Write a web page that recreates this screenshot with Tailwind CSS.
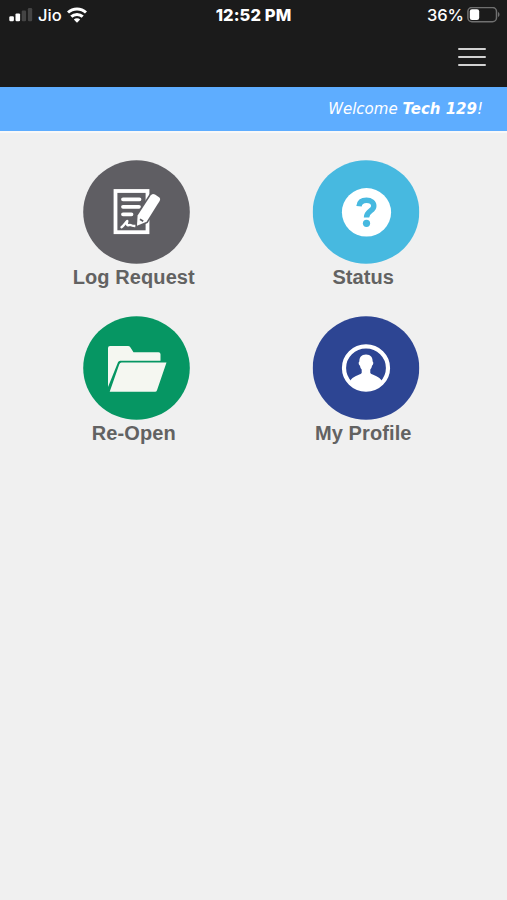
<!DOCTYPE html>
<html lang="en">
<head>
    <meta charset="UTF-8">
    <meta name="viewport" content="width=device-width, initial-scale=1.0">
    <title>Service Desk</title>
    <script src="https://cdn.jsdelivr.net/npm/@tailwindcss/browser@4"></script>
</head>
<body class="bg-[#f0f0f0] min-h-screen font-['Liberation_Sans',Arial,sans-serif]">
    <header class="h-[87px] bg-[#1b1b1b] text-white">
        <!-- Status bar -->
        <div class="h-[29px] grid grid-cols-3 items-center pl-[9px] pr-[7px] font-[Inter,sans-serif]">
            <div class="flex items-center">
                <svg class="w-6 h-[14px]" viewBox="0 0 24 14">
                    <rect x="0.3" y="8.2" width="4.6" height="5" rx="1.2" fill="#fff"/>
                    <rect x="6.5" y="5.4" width="4.6" height="7.8" rx="1.2" fill="#fff"/>
                    <rect x="12.7" y="2.5" width="4.4" height="10.7" rx="1.2" fill="#444"/>
                    <rect x="18.9" y="0" width="4.3" height="13.2" rx="1.2" fill="#444"/>
                </svg>
                <span class="ml-[5px] w-[25px] pt-[2px] text-[16.5px] leading-none font-medium">Jio</span>
                <svg class="ml-[4px] w-5 h-4" viewBox="0 0 20 16" fill="none" stroke="#fff" stroke-width="3">
                    <path d="M1 5.500a13 13 0 0 1 18 0"/>
                    <path d="M4.300 9.700a8.200 8.200 0 0 1 11.400 0"/>
                    <path d="M10 15.700l-3.200-3.200a4.600 4.600 0 0 1 6.400 0z" fill="#fff" stroke="none"/>
                </svg>
            </div>
            <div class="pt-[2px] pr-[2px] text-center text-[16.5px] leading-none font-extrabold tracking-[0.1px] whitespace-nowrap">12:52 PM</div>
            <div class="flex items-center justify-end">
                <span class="pt-[2px] text-[16.5px] leading-none font-medium">36%</span>
                <svg class="ml-[3px] w-[33px] h-4" viewBox="0 0 33 16">
                    <rect x="0.9" y="0.5" width="28.6" height="14.2" rx="4" fill="none" stroke="#707070" stroke-width="1.5"/>
                    <rect x="2.8" y="2.300" width="9.4" height="10.6" rx="2.2" fill="#fff"/>
                    <path d="M31 5c2 .8 2 4.200 0 5z" fill="#707070"/>
                </svg>
            </div>
        </div>
        <!-- Menu button -->
        <div class="flex justify-end pt-[18px] pr-[21px]">
            <button class="flex flex-col gap-[6.400px] pt-[0.6px]" aria-label="Menu">
                <span class="block w-[28px] h-[2px] rounded bg-[#d2d2d2]"></span>
                <span class="block w-[28px] h-[2px] rounded bg-[#d2d2d2]"></span>
                <span class="block w-[28px] h-[2px] rounded bg-[#d2d2d2]"></span>
            </button>
        </div>
    </header>

    <div class="h-[46px] bg-[#5eadff] border-b-2 border-[#f8f8f8] pr-[24px] text-right text-white italic text-[15px] leading-[45px] font-['DejaVu_Sans',Verdana,sans-serif]">
        Welcome <b>Tech 129</b>!
    </div>

    <main class="ml-[19px] w-[459px] mt-[27px] grid grid-cols-2 gap-y-[26px] text-center text-[20px] leading-[26px] font-bold tracking-[0.1px] text-[#626262]">
        <a class="block">
            <svg class="block mx-auto translate-x-[3px] w-[107px] h-[104px]" viewBox="0 0 107 104">
                <ellipse cx="53.5" cy="52" rx="53.300" ry="51.800" fill="#5f5e63"/>
                <rect x="32.500" y="31" width="32" height="41.200" fill="none" stroke="#fff" stroke-width="3.800"/>
                <path d="M40 39.300h16.500M40 46.800h16M40 54.300h8.500" stroke="#fff" stroke-width="3.800" stroke-linecap="round"/>
                <path d="M38.500 67.200C41 65.500 42.500 62.500 44.300 61C44 63 43.300 65 44.800 65.300C46 65.300 47 64.500 48 65.200C49.200 66.200 50.500 66 53 66" fill="none" stroke="#fff" stroke-width="2.400" stroke-linecap="round" stroke-linejoin="round"/>
                <path d="M54 65.700L54.600 55.500L67.600 35.400Q69.300 32.900 72 34.500L75.700 36.900Q78 38.500 76.600 41L63.600 61.700Z" fill="#fff" stroke="#5f5e63" stroke-width="3.200" paint-order="stroke"/>
                <path d="M57 59.300l3.200 2" stroke="#5f5e63" stroke-width="1.800"/>
            </svg>
            Log Request
        </a>
        <a class="block">
            <svg class="block mx-auto translate-x-[2.5px] w-[107px] h-[104px]" viewBox="0 0 107 104">
                <ellipse cx="53.5" cy="52" rx="53.300" ry="51.800" fill="#47b9e0"/>
                <ellipse cx="54" cy="52.300" rx="24.600" ry="24.200" fill="#fff"/>
                <path d="M46.500 46.200C47 42 50 40.300 54 40.300C58.500 40.300 61.300 42.500 61.300 45.900C61.300 51.200 54 50.800 54 57.500" fill="none" stroke="#47b9e0" stroke-width="5.400"/>
                <circle cx="54" cy="63.300" r="3.600" fill="#47b9e0"/>
            </svg>
            Status
        </a>
        <a class="block">
            <svg class="block mx-auto translate-x-[3px] w-[107px] h-[104px]" viewBox="0 0 107 104">
                <ellipse cx="53.5" cy="52" rx="53.300" ry="51.800" fill="#069663"/>
                <path d="M25 71V32Q25 30 27 30H45Q46.500 30 47.300 31.300L50.500 36.300H75.500Q77.500 36.300 77.500 38.300V44.800H37.200Q35.600 44.800 35 46.300Z" fill="#f5f7f1"/>
                <path d="M26.700 75.800L36.300 48.200Q36.900 46.500 38.500 46.500H83.500L74 74.300Q73.500 75.800 72 75.800Z" fill="#f5f7f1"/>
            </svg>
            Re-Open
        </a>
        <a class="block">
            <svg class="block mx-auto translate-x-[2.5px] w-[107px] h-[104px]" viewBox="0 0 107 104">
                <ellipse cx="53.5" cy="52" rx="53.300" ry="51.800" fill="#2d4593"/>
                <ellipse cx="53.500" cy="52" rx="22" ry="21.600" fill="none" stroke="#fff" stroke-width="4.200"/>
                <path d="M53.500 38.500C58.200 38.500 60.300 41.500 60.100 45.600C61.200 46 60.900 49.200 59.500 49.700C59.200 51.500 58.700 52.600 57.800 53.600V57C60 59.700 67 59.500 69.500 65.500C66 71 60 74.500 53.500 74.500S41 71 37.500 65.500C40 59.500 47 59.700 49.200 57V53.600C48.300 52.600 47.800 51.500 47.500 49.700C46.100 49.200 45.800 46 46.900 45.600C46.700 41.500 48.800 38.500 53.500 38.500Z" fill="#fff"/>
            </svg>
            My Profile
        </a>
    </main>
</body>
</html>
